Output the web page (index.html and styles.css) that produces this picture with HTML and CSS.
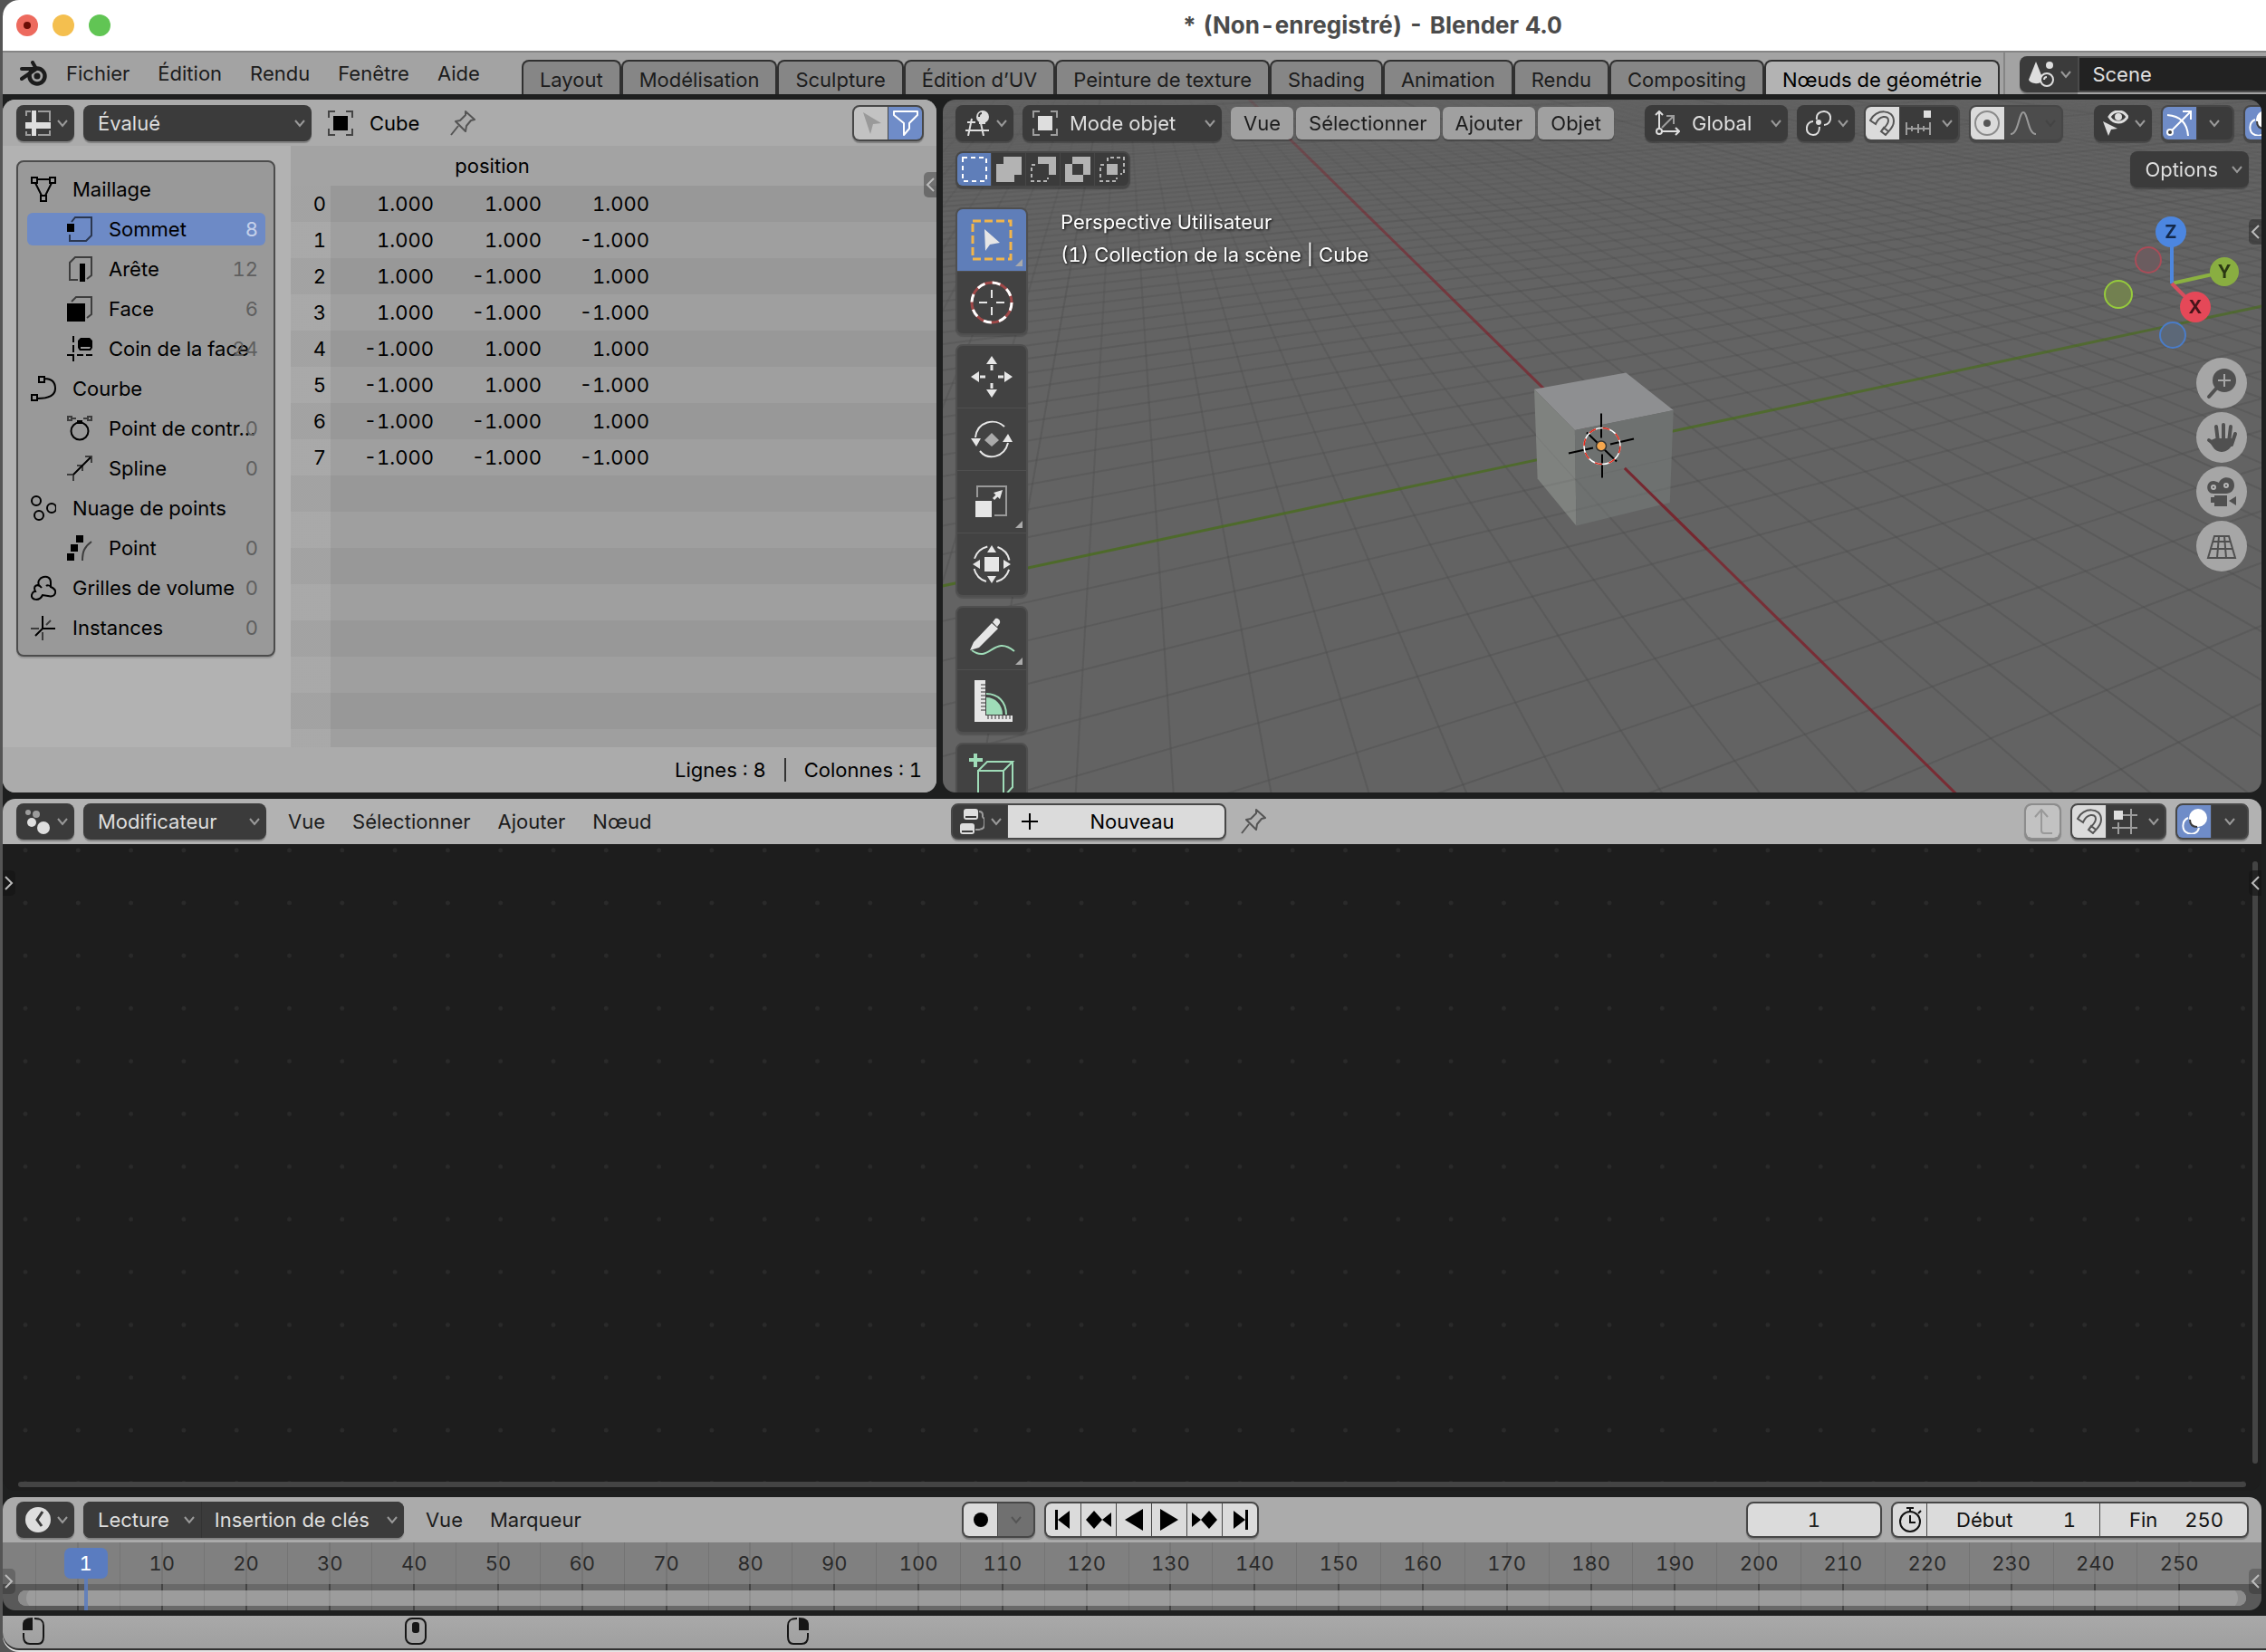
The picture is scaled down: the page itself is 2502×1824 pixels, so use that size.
FILE: index.html
```html
<!DOCTYPE html>
<html lang="fr">
<head>
<meta charset="utf-8">
<title>Blender 4.0</title>
<link rel="stylesheet" href="styles.css">
</head>
<body>
<svg class="defs" aria-hidden="true">
  <symbol id="chev" viewBox="0 0 14 14"><path d="M2 4l5 6 5-6"/></symbol>
  <symbol id="left" viewBox="0 0 14 28"><path d="M11 7L4 14l7 7"/></symbol>
  <symbol id="right" viewBox="0 0 14 28"><path d="M3 7l7 7-7 7"/></symbol>
  <symbol id="logo" viewBox="0 0 32 28"><path d="M3 9h15M3 20L19 9 15 2" stroke-width="4" stroke-linecap="round" stroke-linejoin="round"/><circle cx="20" cy="17" r="8.500" stroke-width="4.500"/><circle class="f" cx="20" cy="17" r="3.500"/></symbol>
  <symbol id="sheet" viewBox="0 0 28 28"><path class="dim" d="M1 6V1h5M14 1h13v11M27 22v5H14M6 27H1v-4"/><path class="f" d="M7 0h5v13h16v7H12v8H7v-8H0v-7h7z"/></symbol>
  <symbol id="object" viewBox="0 0 28 28"><path class="dim" d="M1 8V1h7M20 1h7v7M27 20v7h-7M8 27H1v-7"/><path class="f" d="M6 6h16v16H6z"/></symbol>
  <symbol id="pin" viewBox="0 0 28 28"><path d="M1 27l8-10M17 1l10 9-4 1-5 6-1 6-11-11 5-1 6-6z" stroke-linejoin="round"/></symbol>
  <symbol id="arrow" viewBox="0 0 28 28"><path class="f" d="M5 2l20 12-9 1-3 11z"/></symbol>
  <symbol id="funnel" viewBox="0 0 28 28"><path d="M1 1h26v4l-9 9v6l-6 7V14L1 5z" stroke-linejoin="round"/></symbol>
  <symbol id="mesh" viewBox="0 0 28 28"><path d="M1 1h6v6H1zM21 1h6v6h-6zM11 21h6v6h-6zM7 3h14M5 7l7 14M23 7l-7 14"/></symbol>
  <symbol id="vertex" viewBox="0 0 28 28"><path class="dim" d="M5 6l4-5h18v20l-6 6H3v-7"/><path class="f" d="M0 8h8v9H0z"/></symbol>
  <symbol id="edge" viewBox="0 0 28 28"><path class="dim" d="M12 26H3V7l6-6h18v20l-5 4"/><path class="f" d="M14 8h6v20h-6z"/></symbol>
  <symbol id="face" viewBox="0 0 28 28"><path class="dim" d="M5 6l5-5h17v19l-5 4"/><path class="f" d="M0 8h20v20H0z"/></symbol>
  <symbol id="corner" viewBox="0 0 28 28"><path class="f" fill-rule="evenodd" d="M15 2h10l3 3v8l-2 3H14l-2-3V5zM15 12v2h10l1-2z"/><path d="M7 0v7M7 10v8M7 22v6M0 21h8M11 21h7M21 21h7"/></symbol>
  <symbol id="curve" viewBox="0 0 28 28"><path d="M9 1h6v6H9zM1 21h6v6H1zM15 3c8 0 12 4 12 11s-7 11-20 11"/></symbol>
  <symbol id="ctrl" viewBox="0 0 28 28"><circle cx="14" cy="17" r="9.500"/><path class="dim" d="M1 1h4v4H1zM23 1h4v4h-4zM6 3h4M18 3h4"/><path class="f" d="M11 5h6v4h-6z"/></symbol>
  <symbol id="spline" viewBox="0 0 28 28"><path d="M7 21L26 2"/><path class="dim" d="M20 1h7v7M0 21h7v7M11 11h6v6"/></symbol>
  <symbol id="cloud" viewBox="0 0 28 28"><circle cx="6" cy="6" r="5"/><circle cx="23" cy="14" r="5"/><circle cx="9" cy="22" r="5"/></symbol>
  <symbol id="point" viewBox="0 0 28 28"><path class="f" d="M10 0h8v8h-8zM4 10h8v8H4zM0 20h8v8H0z"/><path class="dim" d="M27 7C19 13 17 18 17 28"/></symbol>
  <symbol id="volume" viewBox="0 0 28 28"><path d="M9 11C5 2 22-3 22 8v5c9 4 5 12-3 10l-6-1c-3 7-13 6-12 0 1-4 3-4 4-4-3-7 3-9 7-4M22 13c-1-2-4-2-5-1"/></symbol>
  <symbol id="inst" viewBox="0 0 28 28"><path d="M13 1v14h14M13 15l-8 8"/><path class="dim" d="M0 15h9M13 19v9M17 11l5-5"/></symbol>
  <symbol id="view3d" viewBox="0 0 28 28"><path d="M3 13h9M1 22h26M8 9L4 28M18 14l3 14M16 14h7"/><circle class="f" cx="20" cy="7" r="7"/><path class="cut" d="M16 7c0-2 1-4 3-4"/></symbol>
  <symbol id="axes" viewBox="0 0 28 28"><path d="M5 20V2M1 5l4-4 4 4M8 23h18M23 19l4 4-4 4"/><circle cx="5" cy="23" r="3"/><path class="dim" d="M8 19L20 7M13 6h8v9"/></symbol>
  <symbol id="pivot" viewBox="0 0 28 28"><path d="M12 10C11 4 15 1 20 1c10 0 9 15 0 15M15 18c0 6-3 9-7 9-10 0-9-15 0-15"/><circle class="f" cx="14" cy="13" r="3"/></symbol>
  <symbol id="magnet" viewBox="0 0 28 28"><path d="M1 11C7-2 27-2 27 12c0 7-6 11-9 15l-5-4c4-5 8-7 8-12 0-6-10-6-14 4zM13 23l3-4 5 4"/></symbol>
  <symbol id="snapinc" viewBox="0 0 28 28"><path class="dim" d="M1 13v14M27 13v14M1 20h26M7 17v6M14 15v10M20 17v6"/><path class="f" d="M20 0h8v8h-8z"/></symbol>
  <symbol id="prop" viewBox="0 0 28 28"><circle class="dim" cx="14" cy="14" r="13"/><circle class="f" cx="14" cy="14" r="4"/></symbol>
  <symbol id="bell" viewBox="0 0 28 28"><path d="M0 26C9 26 9 2 14 2s5 24 14 24"/></symbol>
  <symbol id="eye" viewBox="0 0 28 28"><path d="M7 7c5-8 15-8 20 0-5 8-15 8-20 0z" stroke-width="3"/><circle class="f" cx="17" cy="7" r="4"/><path class="f" d="M0 12l16 8-7 1-3 7z"/></symbol>
  <symbol id="gizmo" viewBox="0 0 28 28"><path d="M1 5c14 1 22 9 23 23M6 22L26 2M18 1h9v9"/><circle class="bgf" cx="4" cy="24" r="3"/></symbol>
  <symbol id="overlay" viewBox="0 0 28 28"><circle class="f" cx="18" cy="10" r="10"/><path d="M7 10c-7 3-8 14 0 17 6 2 11-1 12-6"/><path class="cut" d="M9 12c0 5 3 8 8 8"/></symbol>
  <symbol id="scene" viewBox="0 0 28 28"><path class="f" d="M8 0l8 20c-3 6-14 5-16 0z"/><circle class="f" cx="23" cy="4" r="4"/><circle class="bgf" cx="20" cy="20" r="7"/><path d="M17 20c0-2 1-3 3-3"/></symbol>
  <symbol id="nodes" viewBox="0 0 28 28"><circle class="dim f" cx="3" cy="4" r="3"/><circle class="dim f" cx="12" cy="6" r="4"/><circle class="f" cx="7" cy="15" r="5"/><circle class="f" cx="20" cy="21" r="7"/></symbol>
  <symbol id="tree" viewBox="0 0 28 28"><rect class="f" x="5" y="0" width="16" height="12" rx="3"/><rect class="f" x="1" y="16" width="16" height="12" rx="3"/><path class="cut" d="M7 9h12M3 25h12"/><path class="dim" d="M22 3c3 0 4 2 4 4s-1 2 2 4v6c0 5-3 5-6 6h-4"/></symbol>
  <symbol id="up" viewBox="0 0 28 28"><path d="M12 2v22c0 2 1 3 3 3h9M5 9l7-8 7 8"/></symbol>
  <symbol id="grid" viewBox="0 0 28 28"><path class="dim" d="M12 7h16M0 21h28M21 0v28M7 15v13"/><path class="f" d="M2 2h10v10H2z"/></symbol>
  <symbol id="clock" viewBox="0 0 28 28"><circle class="f" cx="14" cy="14" r="14"/><path class="cut" d="M19 5l-6 9 5 7" stroke-width="3"/></symbol>
  <symbol id="watch" viewBox="0 0 28 28"><circle cx="14" cy="16" r="11"/><path d="M10 1h8M14 1v4M14 9v8h6M23 7l3-3"/></symbol>
  <symbol id="first" viewBox="0 0 28 28"><path class="f" d="M5 3h3v22H5zM8 14l13-10v20z"/></symbol>
  <symbol id="prevk" viewBox="0 0 28 28"><path class="f" d="M0 14L9 4l9 10-9 10zM18 14l10-8v16z"/></symbol>
  <symbol id="rev" viewBox="0 0 28 28"><path class="f" d="M4 14L24 2v24z"/></symbol>
  <symbol id="mleft" viewBox="0 0 24 30"><path d="M13 1c7 0 10 2 10 8v12c0 6-2 8-6 8H8c-4 0-7-2-7-8v-4"/><path class="f" d="M11 0v14H0V8c0-5 3-8 11-8z"/></symbol>
  <symbol id="mmid" viewBox="0 0 24 30"><rect x="1" y="1" width="22" height="28" rx="7"/><rect class="f" x="8" y="5" width="8" height="12" rx="3"/></symbol>
</svg>

<div class="window">
  <header class="titlebar">
    <div class="lights"><button class="light red" aria-label="Fermer"></button><button class="light yellow" aria-label="Réduire"></button><button class="light green" aria-label="Agrandir"></button></div>
    <h1>* (Non-enregistré) - Blender 4.0</h1>
  </header>

  <nav class="topbar">
    <div class="menus">
      <button class="menu logo" aria-label="Blender"><svg class="i wide"><use href="#logo"/></svg></button>
      <button class="menu">Fichier</button><button class="menu">Édition</button><button class="menu">Rendu</button><button class="menu">Fenêtre</button><button class="menu">Aide</button>
    </div>
    <div class="tabs">
      <button class="tab">Layout</button><button class="tab">Modélisation</button><button class="tab">Sculpture</button><button class="tab">Édition d’UV</button><button class="tab">Peinture de texture</button><button class="tab">Shading</button><button class="tab">Animation</button><button class="tab">Rendu</button><button class="tab">Compositing</button><button class="tab active">Nœuds de géométrie</button>
    </div>
    <div class="scene">
      <button class="dark type" aria-label="Scène"><svg class="i"><use href="#scene"/></svg><svg class="chev"><use href="#chev"/></svg></button>
      <input type="text" value="Scene" aria-label="Nom de la scène">
    </div>
  </nav>

  <main>
    <section class="area sheet">
      <div class="head">
        <button class="dark type" aria-label="Tableur"><svg class="i"><use href="#sheet"/></svg><svg class="chev"><use href="#chev"/></svg></button>
        <div class="drop w252"><select aria-label="État"><option>Évalué</option></select><svg class="chev"><use href="#chev"/></svg></div>
        <div class="crumb"><svg class="i"><use href="#object"/></svg><span>Cube</span></div>
        <button class="plain" aria-label="Épingler"><svg class="i"><use href="#pin"/></svg></button>
        <div class="seg end">
          <button class="cell pale off" aria-label="Sélection uniquement"><svg class="i"><use href="#arrow"/></svg></button><button class="cell blue" aria-label="Filtrer"><svg class="i"><use href="#funnel"/></svg></button>
        </div>
      </div>
      <div class="sheet-body">
        <aside>
          <ul class="tree">
            <li class="node"><svg class="i"><use href="#mesh"/></svg><span>Maillage</span></li>
            <li class="node sub sel"><svg class="i"><use href="#vertex"/></svg><span>Sommet</span><b>8</b></li>
            <li class="node sub"><svg class="i"><use href="#edge"/></svg><span>Arête</span><b>12</b></li>
            <li class="node sub"><svg class="i"><use href="#face"/></svg><span>Face</span><b>6</b></li>
            <li class="node sub"><svg class="i"><use href="#corner"/></svg><span>Coin de la face</span><b>24</b></li>
            <li class="node"><svg class="i"><use href="#curve"/></svg><span>Courbe</span></li>
            <li class="node sub"><svg class="i"><use href="#ctrl"/></svg><span>Point de contr…</span><b>0</b></li>
            <li class="node sub"><svg class="i"><use href="#spline"/></svg><span>Spline</span><b>0</b></li>
            <li class="node"><svg class="i"><use href="#cloud"/></svg><span>Nuage de points</span></li>
            <li class="node sub"><svg class="i"><use href="#point"/></svg><span>Point</span><b>0</b></li>
            <li class="node"><svg class="i"><use href="#volume"/></svg><span>Grilles de volume</span><b>0</b></li>
            <li class="node"><svg class="i"><use href="#inst"/></svg><span>Instances</span><b>0</b></li>
          </ul>
        </aside>
        <div class="data">
          <table>
            <thead><tr><th class="idx"></th><th colspan="3">position</th></tr></thead>
            <tbody>
              <tr><th>0</th><td>1.000</td><td>1.000</td><td>1.000</td></tr>
              <tr><th>1</th><td>1.000</td><td>1.000</td><td>-1.000</td></tr>
              <tr><th>2</th><td>1.000</td><td>-1.000</td><td>1.000</td></tr>
              <tr><th>3</th><td>1.000</td><td>-1.000</td><td>-1.000</td></tr>
              <tr><th>4</th><td>-1.000</td><td>1.000</td><td>1.000</td></tr>
              <tr><th>5</th><td>-1.000</td><td>1.000</td><td>-1.000</td></tr>
              <tr><th>6</th><td>-1.000</td><td>-1.000</td><td>1.000</td></tr>
              <tr><th>7</th><td>-1.000</td><td>-1.000</td><td>-1.000</td></tr>
            </tbody>
          </table>
          <button class="handle r grey" aria-label="Barre latérale"><svg><use href="#left"/></svg></button>
        </div>
      </div>
      <div class="foot"><span>Lignes : 8</span><i></i><span>Colonnes : 1</span></div>
    </section>

    <section class="area view">
      <canvas id="scene3d" class="canvas"></canvas>
      <div class="overlay">
        <div class="head clear">
          <button class="dark type" aria-label="Vue 3D"><svg class="i"><use href="#view3d"/></svg><svg class="chev"><use href="#chev"/></svg></button>
          <div class="drop icon w220"><svg class="i lead"><use href="#object"/></svg><select aria-label="Mode"><option>Mode objet</option></select><svg class="chev"><use href="#chev"/></svg></div>
          <div class="pills"><button class="pill">Vue</button><button class="pill">Sélectionner</button><button class="pill">Ajouter</button><button class="pill">Objet</button></div>
          <div class="drop icon w158 far"><svg class="i lead"><use href="#axes"/></svg><select aria-label="Orientation"><option>Global</option></select><svg class="chev"><use href="#chev"/></svg></div>
          <button class="dark type" aria-label="Pivot"><svg class="i"><use href="#pivot"/></svg><svg class="chev"><use href="#chev"/></svg></button>
          <div class="seg">
            <button class="cell pale" aria-label="Aimanter"><svg class="i"><use href="#magnet"/></svg></button><button class="cell dark2" aria-label="Aimanter à"><svg class="i"><use href="#snapinc"/></svg><svg class="chev"><use href="#chev"/></svg></button>
          </div>
          <div class="seg">
            <button class="cell pale" aria-label="Édition proportionnelle"><svg class="i"><use href="#prop"/></svg></button><button class="cell dark2 off" aria-label="Atténuation"><svg class="i"><use href="#bell"/></svg><svg class="chev"><use href="#chev"/></svg></button>
          </div>
          <button class="dark type far" aria-label="Visibilité"><svg class="i"><use href="#eye"/></svg><svg class="chev"><use href="#chev"/></svg></button>
          <div class="seg">
            <button class="cell blue" aria-label="Gizmos"><svg class="i"><use href="#gizmo"/></svg></button><button class="cell dark2 slim" aria-label="Options des gizmos"><svg class="chev"><use href="#chev"/></svg></button>
          </div>
          <div class="seg">
            <button class="cell blue" aria-label="Surimpressions"><svg class="i"><use href="#overlay"/></svg></button><button class="cell dark2 slim" aria-label="Options de surimpression"><svg class="chev"><use href="#chev"/></svg></button>
          </div>
        </div>
        <div class="head clear">
          <div class="seg modes">
            <button class="cell blue" aria-label="Définir"><svg class="i"><path d="M1 1h26v26H1z" stroke-dasharray="5 4"/></svg></button>
            <button class="cell dark2" aria-label="Étendre"><svg class="i"><path class="f" d="M8 0h20v20h-8v8H0V8h8z"/></svg></button>
            <button class="cell dark2" aria-label="Soustraire"><svg class="i"><path class="f" d="M8 0h20v20h-8V8H8z"/><path d="M5 9H1v18h18v-4" stroke-dasharray="4 3"/></svg></button>
            <button class="cell dark2" aria-label="Inverser"><svg class="i"><path class="f" fill-rule="evenodd" d="M8 0h20v20h-8v8H0V8h8zM8 8v12h12V8z"/></svg></button>
            <button class="cell dark2" aria-label="Intersection"><svg class="i"><path class="f" d="M8 8h12v12H8z"/><path d="M9 5V1h18v18h-4M5 9H1v18h18v-4" stroke-dasharray="4 3"/></svg></button>
          </div>
          <button class="dark opts">Options<svg class="chev"><use href="#chev"/></svg></button>
        </div>
        <div class="stage">
          <div class="tools">
            <div class="group">
              <button class="tool on more" aria-label="Sélection rectangle"><svg class="t" viewBox="0 0 48 48"><path d="M3 3h42v42H3z" stroke="#f2b54a" stroke-width="3" stroke-dasharray="9 4"/><path class="f" d="M16 12l17 15-11 2-5 7z"/></svg></button>
              <button class="tool" aria-label="Curseur"><svg class="t" viewBox="0 0 48 48"><circle cx="24" cy="24" r="22" stroke="#a04848" stroke-width="3"/><circle cx="24" cy="24" r="22" stroke="#fff" stroke-width="3" stroke-dasharray="9 8.280"/><path d="M24 10v9M24 29v9M10 24h9M29 24h9" stroke-width="2"/></svg></button>
            </div>
            <div class="group">
              <button class="tool" aria-label="Déplacer"><svg class="t" viewBox="0 0 48 48"><path class="f" d="M24 1l6 9H18zM24 47l6-9H18zM1 24l9-6v12zM47 24l-9-6v12z"/><path d="M24 11v6M24 31v6M11 24h6M31 24h6" stroke-width="3"/></svg></button>
              <button class="tool" aria-label="Tourner"><svg class="t" viewBox="0 0 48 48"><path d="M6 22C8 4 28 0 38 10M42 28C38 44 20 48 11 37" stroke-width="2"/><path class="f" d="M1 23h11l-5 9zM36 27h11l-5-9z"/><path fill="#aaa" stroke="none" d="M24 17l8 8-8 7-8-7z"/></svg></button>
              <button class="tool more" aria-label="Redimensionner"><svg class="t" viewBox="0 0 48 48"><path d="M8 19V7h32v32H27" stroke="#999" stroke-width="2"/><path class="f" d="M6 23h18v18H6zM36 11l-3 10-7-7z"/><path d="M26 21l8-8" stroke-width="3"/></svg></button>
              <button class="tool" aria-label="Transformer"><svg class="t" viewBox="0 0 48 48"><circle cx="24" cy="24" r="20" stroke-width="2" stroke-dasharray="20 11.400" stroke-dashoffset="-6"/><path class="f" d="M16 16h16v16H16zM24 3l5 8H19zM24 45l5-8H19zM3 24l8-5v10zM45 24l-8-5v10z"/></svg></button>
            </div>
            <div class="group">
              <button class="tool more" aria-label="Annoter"><svg class="t" viewBox="0 0 48 48"><path class="f" d="M0 37l4-9L24 7l7 6-21 21zM25 6l3-4c3-1 6 2 5 5l-3 4z"/><path d="M2 37c20 15 24-18 47 1" stroke="#9fdcb8" stroke-width="2"/></svg></button>
              <button class="tool" aria-label="Mesurer"><svg class="t" viewBox="0 0 48 48"><path class="f" d="M5 1h12v39h30v7H5z"/><path d="M12 6h5M12 10h5M12 14h5M12 18h5M12 22h5M12 26h5M12 30h5M12 34h5M20 40v4M24 40v4M28 40v4M32 40v4M36 40v4M40 40v4M44 40v4" stroke="#333" stroke-width="1"/><path fill="#9fdcb8" stroke="none" d="M18 20c10 0 18 8 18 19H18z"/><path d="M18 16c13 0 22 9 22 23" stroke="#9fdcb8" stroke-width="2"/></svg></button>
            </div>
            <div class="group">
              <button class="tool" aria-label="Ajouter un cube"><svg class="t green" viewBox="0 0 48 48"><path d="M6 0v15M-1 7h15" stroke-width="4"/><path d="M9 48V19h28v29M9 19l10-10h28L37 19M47 9v28L37 48"/></svg></button>
              <button class="tool" aria-label="Autre"></button>
            </div>
          </div>
          <p class="info">Perspective Utilisateur<br>(1) Collection de la scène | Cube</p>
          <div class="nav">
            <svg class="gizmo" viewBox="0 0 160 160">
              <circle cx="55" cy="54" r="14" fill="#6b5c5f" stroke="#a94c58" stroke-width="2"/>
              <path d="M81 80L139 67" stroke="#8bb140" stroke-width="4"/><path d="M81 80V23" stroke="#4d87df" stroke-width="4"/>
              <path d="M81 80l26 26" stroke="#d44f5e" stroke-width="4"/>
              <circle cx="22" cy="92" r="15" fill="#728050" stroke="#96cb3c" stroke-width="2"/>
              <circle cx="82" cy="137" r="14" fill="#5c6878" stroke="#4a7cc8" stroke-width="2"/>
              <circle cx="80" cy="23" r="17" fill="#4c86e0"/><circle cx="139" cy="67" r="16" fill="#89ae41"/><circle cx="107" cy="106" r="17" fill="#e54858"/>
              <text x="80" y="30" fill="#14294a">Z</text><text x="139" y="74" fill="#2a3812">Y</text><text x="107" y="113" fill="#47141a">X</text>
            </svg>
            <button class="round" aria-label="Zoom"><svg viewBox="0 0 56 56"><circle class="f" cx="31" cy="25" r="13"/><path d="M22 34l-8 9" stroke-width="4" stroke-linecap="round"/><path d="M31 18v14M24 25h14" stroke="#a6a6a6" stroke-width="2"/></svg></button>
            <button class="round" aria-label="Déplacer la vue"><svg viewBox="0 0 56 56"><path d="M22 16l2 17M30 14v18M38 16l-2 17M43 24l-4 12M14 31l8 6" stroke-width="4" stroke-linecap="round"/><path class="f" d="M21 29h18l2 3c-3 13-17 16-23 6l-4-6z"/></svg></button>
            <button class="round" aria-label="Vue caméra"><svg viewBox="0 0 56 56"><path class="f" d="M19 16c2 0 4 1 6 2 3-8 17-8 17 3 0 5-4 9-9 9H19c-9 0-9-14 0-14zM20 32h14v12H20v-4h-4v-6h4zM36 38l8-5v10z"/><circle class="ring" cx="19" cy="23" r="2"/><circle class="ring" cx="33" cy="21" r="2"/></svg></button>
            <button class="round" aria-label="Perspective"><svg viewBox="0 0 56 56"><path d="M20 17h16l7 24H13zM18 23h20M16 31h24M25 17l-2 24M31 17l2 24"/></svg></button>
          </div>
        </div>
      </div>
      <button class="handle r high" aria-label="Barre latérale"><svg><use href="#left"/></svg></button>
    </section>

    <section class="area nodes">
      <div class="head light-head">
        <button class="dark type" aria-label="Nœuds de géométrie"><svg class="i"><use href="#nodes"/></svg><svg class="chev"><use href="#chev"/></svg></button>
        <div class="drop w202"><select aria-label="Type"><option>Modificateur</option></select><svg class="chev"><use href="#chev"/></svg></div>
        <div class="menus flat"><button class="menu">Vue</button><button class="menu">Sélectionner</button><button class="menu">Ajouter</button><button class="menu">Nœud</button></div>
        <div class="middle">
          <div class="seg">
            <button class="cell dark2 tree-btn" aria-label="Parcourir"><svg class="i"><use href="#tree"/></svg><svg class="chev"><use href="#chev"/></svg></button><button class="cell pale new"><svg class="i plus"><path d="M9 1v18M0 10h18"/></svg><span>Nouveau</span></button>
          </div>
          <button class="plain" aria-label="Épingler"><svg class="i"><use href="#pin"/></svg></button>
        </div>
        <div class="seg end"><button class="cell pale off" aria-label="Parent"><svg class="i"><use href="#up"/></svg></button></div>
        <div class="seg">
          <button class="cell pale" aria-label="Aimanter"><svg class="i"><use href="#magnet"/></svg></button><button class="cell dark2" aria-label="Aimanter à"><svg class="i"><use href="#grid"/></svg><svg class="chev"><use href="#chev"/></svg></button>
        </div>
        <div class="seg">
          <button class="cell blue" aria-label="Surimpressions"><svg class="i"><use href="#overlay"/></svg></button><button class="cell dark2 slim" aria-label="Options de surimpression"><svg class="chev"><use href="#chev"/></svg></button>
        </div>
      </div>
      <div class="board">
        <canvas id="dots" class="canvas"></canvas>
        <div class="hbar"></div><div class="vbar"></div>
        <button class="handle l dim-h" aria-label="Outils"><svg><use href="#right"/></svg></button>
        <button class="handle r dim-h" aria-label="Barre latérale"><svg><use href="#left"/></svg></button>
      </div>
    </section>

    <section class="area timeline">
      <div class="head">
        <button class="dark type" aria-label="Timeline"><svg class="i"><use href="#clock"/></svg><svg class="chev"><use href="#chev"/></svg></button>
        <div class="joined"><button class="dark pop">Lecture<svg class="chev"><use href="#chev"/></svg></button><button class="dark pop">Insertion de clés<svg class="chev"><use href="#chev"/></svg></button></div>
        <div class="menus flat"><button class="menu">Vue</button><button class="menu">Marqueur</button></div>
        <div class="middle time-mid">
          <div class="seg"><button class="cell pale" aria-label="Insertion automatique"><svg class="i"><circle class="f" cx="14" cy="14" r="8"/></svg></button><button class="cell muted slim" aria-label="Options"><svg class="chev"><use href="#chev"/></svg></button></div>
          <div class="seg play">
            <button class="cell pale" aria-label="Début"><svg class="i"><use href="#first"/></svg></button><button class="cell pale" aria-label="Clé précédente"><svg class="i"><use href="#prevk"/></svg></button><button class="cell pale" aria-label="Lecture arrière"><svg class="i"><use href="#rev"/></svg></button><button class="cell pale" aria-label="Lecture avant"><svg class="i flip"><use href="#rev"/></svg></button><button class="cell pale" aria-label="Clé suivante"><svg class="i flip"><use href="#prevk"/></svg></button><button class="cell pale" aria-label="Fin"><svg class="i flip"><use href="#first"/></svg></button>
          </div>
        </div>
        <div class="seg end"><input class="cell pale frame" type="text" value="1" aria-label="Image actuelle"></div>
        <div class="seg range">
          <button class="cell pale" aria-label="Aperçu"><svg class="i"><use href="#watch"/></svg></button>
          <label class="cell pale num start">Début<input type="text" value="1"></label>
          <label class="cell pale num">Fin<input type="text" value="250"></label>
        </div>
      </div>
      <div class="ruler">
        <div class="out before"></div>
        <div class="out after"></div>
        <div class="scroll"></div>
        <ol class="track">
          <li></li><li>10</li><li>20</li><li>30</li><li>40</li><li>50</li><li>60</li><li>70</li><li>80</li><li>90</li><li>100</li><li>110</li><li>120</li><li>130</li><li>140</li><li>150</li><li>160</li><li>170</li><li>180</li><li>190</li><li>200</li><li>210</li><li>220</li><li>230</li><li>240</li><li>250</li>
        </ol>
        <div class="playhead"><span>1</span></div>
        <button class="handle l low" aria-label="Canaux"><svg><use href="#right"/></svg></button>
        <button class="handle r low" aria-label="Barre latérale"><svg><use href="#left"/></svg></button>
      </div>
    </section>
  </main>

  <footer class="status">
    <svg class="mouse"><use href="#mleft"/></svg><svg class="mouse"><use href="#mmid"/></svg><svg class="mouse flip"><use href="#mleft"/></svg>
  </footer>
</div>
<script src="script.js"></script>
</body>
</html>
```
FILE: styles.css
```css
* { box-sizing: border-box; }
html { height: 100%; }
body { margin: 0; height: 100%; background: #555; padding: 0 0 4px 3px; font: 22px/28px Inter, "Liberation Sans", sans-serif; font-variant-numeric: tabular-nums; color: #000; overflow: hidden; }
button, input, select { font: inherit; font-variant-numeric: inherit; color: inherit; margin: 0; padding: 0; border: 0; background: none; }
button { flex: none; white-space: nowrap; }
h1, p, ul, ol { margin: 0; padding: 0; list-style: none; }
.defs { position: absolute; width: 0; height: 0; }

/* icons */
.i { width: 28px; height: 28px; fill: none; stroke: currentColor; stroke-width: 2; flex: none; overflow: visible; }
.i.wide { width: 32px; }
.f { fill: currentColor; stroke: none; }
.dim { opacity: .6; }
.dim.f { fill: currentColor; }
.cut { stroke: #3b3b3b; }
.flip { transform: scaleX(-1); }
.chev { width: 14px; height: 14px; fill: none; stroke: #999; stroke-width: 2; flex: none; }

.window { height: 100%; display: flex; flex-direction: column; background: #1e1f1f; border-radius: 18px 0 0 18px; overflow: hidden; box-shadow: 0 2px 0 #303030, 0 4px 0 #e4e4e4; }

.titlebar { flex: none; height: 56px; background: #fff; display: flex; align-items: center; }
.lights { display: flex; gap: 16px; padding-left: 15px; width: 21%; }
.light { width: 24px; height: 24px; border-radius: 50%; display: grid; place-items: center; }
.red { background: #ed6a5e; }
.red::after { content: ""; width: 8px; height: 8px; border-radius: 50%; background: #6b0d05; }
.yellow { background: #f4bf4f; }
.green.light { background: #61c554; }
.titlebar h1 { flex: 1; text-align: center; font-size: 26px; font-weight: 700; color: #4b4b4b; }

.topbar { flex: none; height: 48px; background: #a3a3a3; border-top: 2px solid #858585; display: flex; align-items: stretch; color: #1c1c1c; }
.menus { display: flex; align-items: center; gap: 30px; }
.topbar .menus { padding: 0 46px 0 18px; gap: 31px; }
.logo { display: flex; margin-right: -11px; }
.tabs { display: flex; align-items: flex-end; }
.tab { height: 38px; padding: 4px 18px 0; background: #868686; border: 2px solid #303030; border-bottom: 0; border-radius: 8px 8px 0 0; }
.tab.active { background: #b3b3b3; color: #000; }
.scene { flex: 1; min-width: 0; display: flex; align-items: flex-start; margin-left: 4px; padding: 4px 0 0 16px; border-left: 2px solid #858585; }
.scene .dark { border-radius: 8px 0 0 8px; }
.scene input { flex: 1; min-width: 0; height: 40px; background: #222; color: #e0e0e0; border: 2px solid #4a4a4a; border-right: 0; padding: 0 14px; }

main { flex: 1; min-height: 0; padding: 6px 5px 6px 0; display: grid; grid-template-columns: 1031fr 1456fr; grid-template-rows: minmax(0, 1fr) minmax(0, 1fr) auto; gap: 7px; }
.area { min-width: 0; min-height: 0; border-radius: 14px; overflow: hidden; position: relative; display: flex; flex-direction: column; }
.nodes, .timeline { grid-column: 1 / -1; }

.head { flex: none; height: 51px; padding: 0 14px 0 15px; display: flex; align-items: center; gap: 10px; background: #ababab; }
.nodes .head, .timeline .head { height: 50px; }
.light-head { background: #b2b2b2; }
.dark { height: 40px; border-radius: 8px; background: #3b3b3b; color: #dedede; box-shadow: 0 2px 1px rgba(0,0,0,.25); display: flex; align-items: center; }
.type { padding: 0 6px 0 10px; gap: 6px; }
.drop { display: grid; align-items: center; flex: none; }
.drop > * { grid-area: 1 / 1; }
.drop select { appearance: none; width: 100%; height: 40px; border-radius: 8px; background: #3b3b3b; color: #dedede; padding: 0 16px; box-shadow: 0 2px 1px rgba(0,0,0,.25); }
.drop .chev { justify-self: end; margin-right: 6px; z-index: 1; pointer-events: none; }
.drop .lead { margin-left: 11px; color: #dedede; z-index: 1; pointer-events: none; }
.drop.icon select { padding-left: 52px; }
.w252 { width: 252px; } .w220 { width: 220px; } .w202 { width: 202px; } .w158 { width: 158px; }
.crumb { display: flex; align-items: center; gap: 18px; padding: 0 24px 0 8px; }
.plain { display: flex; color: #555; }
.end { margin-left: auto; }

.seg, .joined { display: flex; flex: none; border-radius: 8px; box-shadow: 0 2px 1px rgba(0,0,0,.25); }
.seg { border: 2px solid #474747; background: #474747; gap: 1px; height: 40px; overflow: hidden; }
.cell { display: flex; align-items: center; justify-content: center; height: 36px; min-width: 37px; }
.pale { background: #dbdbdb; color: #222; }
.pale .i { color: #555; }
.pale.off { background: #c2c2c2; }
.pale.off .i { color: #999; }
.seg:has(.off:only-child) { border-color: #8c8c8c; }
.blue { background: #6f8cc8; color: #fff; }
.dark2 { background: #3b3b3b; color: #dedede; padding: 0 5px 0 6px; gap: 11px; }
.dark2.off { background: #4c4c4c; color: #999; gap: 9px; }
.dark2.off .chev { stroke: #444; }
.slim { width: 39px; padding: 0; }
.bgf { fill: #3b3b3b; }
.blue .bgf { fill: #6f8cc8; }
.blue .cut { stroke: #6f8cc8; }
.muted { background: #707070; }
.muted .chev { stroke: #555; }

/* spreadsheet */
.sheet { background: #b2b2b2; }
.sheet-body { flex: 1; min-height: 0; display: flex; }
.sheet aside { width: 318px; flex: none; padding: 16px 17px 0 15px; overflow: hidden; }
.tree { background: #999; border: 2px solid #4c4c4c; border-radius: 8px; padding: 12px 9px 12px 10px; box-shadow: 0 2px 1px rgba(0,0,0,.15); display: flex; flex-direction: column; gap: 8px; }
.node { height: 36px; display: flex; align-items: center; gap: 18px; padding: 0 8px 0 4px; border-radius: 6px; white-space: nowrap; }
.sub { padding-left: 44px; }
.sel { background: #6d8ac6; }
.node span { width: 0; flex: 1; }
.node b { font-weight: 400; color: #5f5f5f; }
.sel b { color: #c4d0ea; }
.data { flex: 1; min-width: 0; position: relative; overflow: hidden; background: #a3a3a3; }
.data::before { content: ""; display: block; position: absolute; inset: 44px 0 0 0; background: linear-gradient(to right, rgba(255,255,255,.1) 44px, transparent 44px), repeating-linear-gradient(#989898 0 40px, #9f9f9f 40px 80px); }
table { position: relative; border-collapse: collapse; table-layout: fixed; width: 401px; }
th, td { font-weight: 400; padding: 0 5px 0 0; text-align: right; height: 40px; }
thead th { height: 44px; text-align: center; padding: 0; }
.idx { width: 44px; }
.foot { flex: none; height: 50px; background: #ababab; display: flex; align-items: center; justify-content: flex-end; padding-right: 16px; gap: 20px; }
.foot i { width: 2px; height: 26px; background: #333; }

.handle { position: absolute; width: 14px; height: 28px; background: rgba(0,0,0,.3); display: block; }
.handle svg { width: 14px; height: 28px; display: block; fill: none; stroke: #bbb; stroke-width: 2; }
.handle.r { right: 0; border-radius: 5px 0 0 5px; }
.handle.l { left: 0; border-radius: 0 5px 5px 0; }
.grey, .low, .dim-h { top: 29px; }
.high { top: 132px; }
.low { background: rgba(0,0,0,.2); }
.dim-h { background: rgba(22,22,22,.7); }

/* 3D view */
.view { background: #636363; }
.canvas { position: absolute; inset: 0; width: 100%; height: 100%; display: block; }
.overlay { position: relative; flex: 1; min-height: 0; display: flex; flex-direction: column; }
.clear { background: none; padding-left: 14px; }
.far { margin-left: 24px; }
.pills { display: flex; gap: 3px; }
.pill { height: 36px; padding: 0 14px; border-radius: 6px; background: #a0a0a0; color: #1c1c1c; box-shadow: 0 2px 1px rgba(0,0,0,.25); }
.modes .cell { min-width: 36px; width: 37px; padding: 0; color: #b3b3b3; }
.modes .blue { color: #fff; background: #5f7eb9; }
.opts { margin-left: auto; padding: 0 6px 0 16px; gap: 14px; }
.stage { flex: 1; min-height: 0; display: flex; align-items: flex-start; padding: 15px 16px 0 14px; }
.tools { display: flex; flex-direction: column; gap: 10px; padding-top: 2px; }
.group { width: 80px; border: 2px solid #4f4f4f; background: #4f4f4f; border-radius: 8px; overflow: hidden; display: flex; flex-direction: column; gap: 1px; box-shadow: 0 2px 1px rgba(0,0,0,.15); }
.tool { height: 68px; background: #424242; color: #e6e6e6; display: grid; place-items: center; position: relative; }
.tool.on { background: #5f7eb9; }
.tool.more::after { content: ""; position: absolute; right: 4px; bottom: 5px; border: 4px solid #aaa; border-top-color: transparent; border-left-color: transparent; }
.t { width: 48px; height: 48px; fill: none; stroke: currentColor; stroke-width: 2; overflow: visible; }
.t.green { color: #9fdcb8; }
.info { padding: 0 0 0 36px; line-height: 36px; color: #fff; text-shadow: 1px 1px 3px #000; }
.nav { margin-left: auto; display: flex; flex-direction: column; align-items: flex-end; gap: 4px; padding-top: 6px; }
.gizmo { width: 160px; height: 160px; margin: 0 4px -2px 0; fill: none; font-size: 20px; font-weight: 700; text-anchor: middle; }
.round { width: 56px; height: 56px; border-radius: 50%; background: #a6a6a6; color: #505050; }
.round svg { width: 56px; height: 56px; display: block; fill: none; stroke: currentColor; stroke-width: 2; }
.ring { stroke: #b5b5b5; }

/* node editor */
.menus.flat { padding: 0 0 0 14px; color: #1c1c1c; }
.nodes { background: #1d1d1d; }
.board { flex: 1; min-height: 0; position: relative; }
.middle { display: flex; align-items: center; gap: 16px; position: absolute; left: 42%; }
.tree-btn { width: 60px; gap: 6px; }
.new { width: 239px; position: relative; color: #000; }
.new .plus { width: 18px; height: 20px; color: #000; position: absolute; left: 15px; }
.new span { padding-left: 34px; }
.hbar { position: absolute; left: 17px; right: 17px; bottom: 4px; height: 6px; border-radius: 3px; background: #444; }
.vbar { position: absolute; right: 4px; top: 19px; bottom: 30px; width: 6px; border-radius: 3px; background: #444; }

/* timeline */
.joined { overflow: hidden; background: #333; gap: 1px; }
.pop { border-radius: 0; padding: 0 6px 0 16px; gap: 15px; box-shadow: none; }
.pop + .pop { padding-left: 14px; gap: 18px; }
.time-mid { left: calc(42% + 12px); gap: 10px; }
.play .cell { min-width: 38px; width: 38px; }
.time-mid .pale .i { color: #000; }
.frame { width: 146px; text-align: center; }
.range .i { color: #111; }
.num { padding: 0 26px 0 32px; gap: 4px; justify-content: space-between; color: #111; }
.num input { width: 48px; text-align: right; }
.start { width: 190px; }
.num:last-child { width: 162px; }
.ruler { height: 75px; position: relative; background: linear-gradient(#808080 46px, #696969 46px); }
.out { position: absolute; top: 46px; bottom: 0; background: rgba(0,0,0,.15); }
.before { left: 0; width: 92px; }
.after { right: 0; width: 91px; }
.scroll { position: absolute; left: 17px; right: 17px; top: 53px; height: 17px; border-radius: 9px; background: #9c9c9c; box-shadow: inset 13px 0 0 -4px #8b8b8b, inset -13px 0 0 -4px #8b8b8b; }
.track { display: flex; height: 75px; margin: 0 45px 0 36px; position: relative; color: #2a2a2a; }
.track li { flex: 1 1 0; text-align: center; padding-top: 9px; background: linear-gradient(rgba(0,0,0,.3), rgba(0,0,0,.3)) center 46px / 2px 7px no-repeat, linear-gradient(rgba(0,0,0,.3), rgba(0,0,0,.3)) center 70px / 2px 5px no-repeat, linear-gradient(rgba(0,0,0,.08), rgba(0,0,0,.08)) center / 2px 100% no-repeat; border-left: 1px solid rgba(0,0,0,.09); }
.playhead { position: absolute; left: 36px; right: 45px; top: 6px; height: 69px; pointer-events: none; }
.playhead span { position: absolute; left: calc(100% * 6 / 260); width: 48px; height: 34px; margin-left: -24px; border-radius: 7px; background: #5a7cc0; color: #fff; text-align: center; line-height: 34px; }
.playhead span::after { content: ""; position: absolute; left: 22px; top: 34px; width: 4px; height: 35px; background: #5a7cc0; opacity: .85; }

.status { flex: none; height: 36px; background: linear-gradient(#a9a9a9, #9f9f9f); display: flex; align-items: center; padding: 0 0 2px 22px; gap: 398px; }
.mouse { width: 24px; height: 30px; fill: none; stroke: #161616; stroke-width: 2; color: #161616; }
```
FILE: script.js
```javascript
// Camera of the 3D view: looks at the origin from DIST units away.
const DIST = 18, LENS = 0.697;
const R = [0.4213, 0.9069, 0], U = [-0.414, 0.1923, 0.8897], N = [0.8069, -0.3748, 0.4565];
const dot = (a, b) => a[0] * b[0] + a[1] * b[1] + a[2] * b[2];

function fit(canvas) {
  canvas.width = canvas.clientWidth;
  canvas.height = canvas.clientHeight;
  return canvas.getContext('2d');
}

function drawScene() {
  const canvas = document.getElementById('scene3d');
  const c = fit(canvas), w = canvas.width, h = canvas.height, f = w * LENS;
  const project = p => {
    const depth = DIST - dot(N, p);
    if (depth < 0.5) return null;
    return [w / 2 + f * dot(R, p) / depth, h / 2 - f * dot(U, p) / depth, depth];
  };
  const line = (axis, k, rgb, alpha, far, width) => {
    c.lineWidth = width;
    for (let t = -160; t < 40; t += 2) {
      const at = s => axis === 'x' ? [s, k, 0] : [k, -s, 0];
      const a = project(at(t)), b = project(at(t + 2));
      if (!a || !b) continue;
      if (Math.max(a[1], b[1]) < -20 || Math.min(a[1], b[1]) > h + 20) continue;
      if (Math.max(a[0], b[0]) < -20 || Math.min(a[0], b[0]) > w + 20) continue;
      const fade = Math.max(0, 1 - a[2] / far);
      if (!fade) continue;
      c.strokeStyle = `rgba(${rgb},${alpha * fade})`;
      c.beginPath(); c.moveTo(a[0], a[1]); c.lineTo(b[0], b[1]); c.stroke();
    }
  };
  const grid = strength => {
    for (let k = -150; k <= 150; k++) {
      if (k === 0) continue;
      const far = k % 10 === 0 ? 140 : 70;
      line('x', k, '80,80,80', strength, far, 2);
      line('y', k, '80,80,80', strength, far, 2);
    }
  };
  grid(0.55);
  line('x', 0, '125,35,45', 1, 80, 3);
  line('y', 0, '74,108,30', 1, 80, 3);

  const outline = pts => {
    c.beginPath();
    pts.map(project).forEach((p, i) => i ? c.lineTo(p[0], p[1]) : c.moveTo(p[0], p[1]));
    c.closePath();
  };
  const face = (pts, fill) => { c.fillStyle = fill; outline(pts); c.fill(); };
  face([[-1, -1, 1], [-1, 1, 1], [1, 1, 1], [1, -1, 1]], '#8e8f91');
  face([[-1, -1, 1], [1, -1, 1], [1, -1, -1], [-1, -1, -1]], '#7f827f');
  face([[1, -1, 1], [1, 1, 1], [1, 1, -1], [1, -1, -1]], '#6e7170');

  // The floor grid shows faintly through the half of the cube below it.
  c.save();
  outline([[-1, -1, 0], [1, -1, 0], [1, 1, 0], [1, 1, -1], [1, -1, -1], [-1, -1, -1]]);
  c.clip();
  grid(0.15);
  c.restore();

  const seg = (p, q, color, width) => {
    c.strokeStyle = color; c.lineWidth = width;
    c.beginPath(); c.moveTo(p[0], p[1]); c.lineTo(q[0], q[1]); c.stroke();
  };
  seg(project([1, 0, 0]), project([4, 0, 0]), 'rgb(118,40,48)', 3);

  // 3D cursor and object origin
  const x = w / 2, y = h / 2;
  seg([x - 1, y - 36], [x - 1, y - 9], '#000', 2);
  seg([x, y + 9], [x, y + 35], '#000', 2);
  seg([x - 37, y + 8], [x - 10, y + 2], '#000', 2);
  seg([x + 9, y - 2], [x + 35, y - 8], '#000', 2);
  seg([x - 17, y - 15], [x + 16, y + 17], '#000', 2);
  c.lineWidth = 1.5;
  c.strokeStyle = '#fff';
  c.beginPath(); c.arc(x, y, 20, 0, 7); c.stroke();
  c.strokeStyle = '#e02a1c'; c.setLineDash([8, 7.7]);
  c.beginPath(); c.arc(x, y, 20, 0, Math.PI * 2); c.stroke();
  c.setLineDash([]);
  c.fillStyle = '#f5a74e'; c.strokeStyle = '#333'; c.lineWidth = 1.5;
  c.beginPath(); c.arc(x - 1, y, 5.5, 0, 7); c.fill(); c.stroke();
}

function drawDots() {
  const canvas = document.getElementById('dots');
  const c = fit(canvas), step = 58.3;
  c.fillStyle = '#2a2a2a';
  for (let y = 6.7; y < canvas.height; y += step)
    for (let x = 25; x < canvas.width; x += step) {
      c.beginPath(); c.arc(x, y, 2.5, 0, 7); c.fill();
    }
}

function draw() { drawScene(); drawDots(); }
window.addEventListener('resize', draw);
draw();
```
